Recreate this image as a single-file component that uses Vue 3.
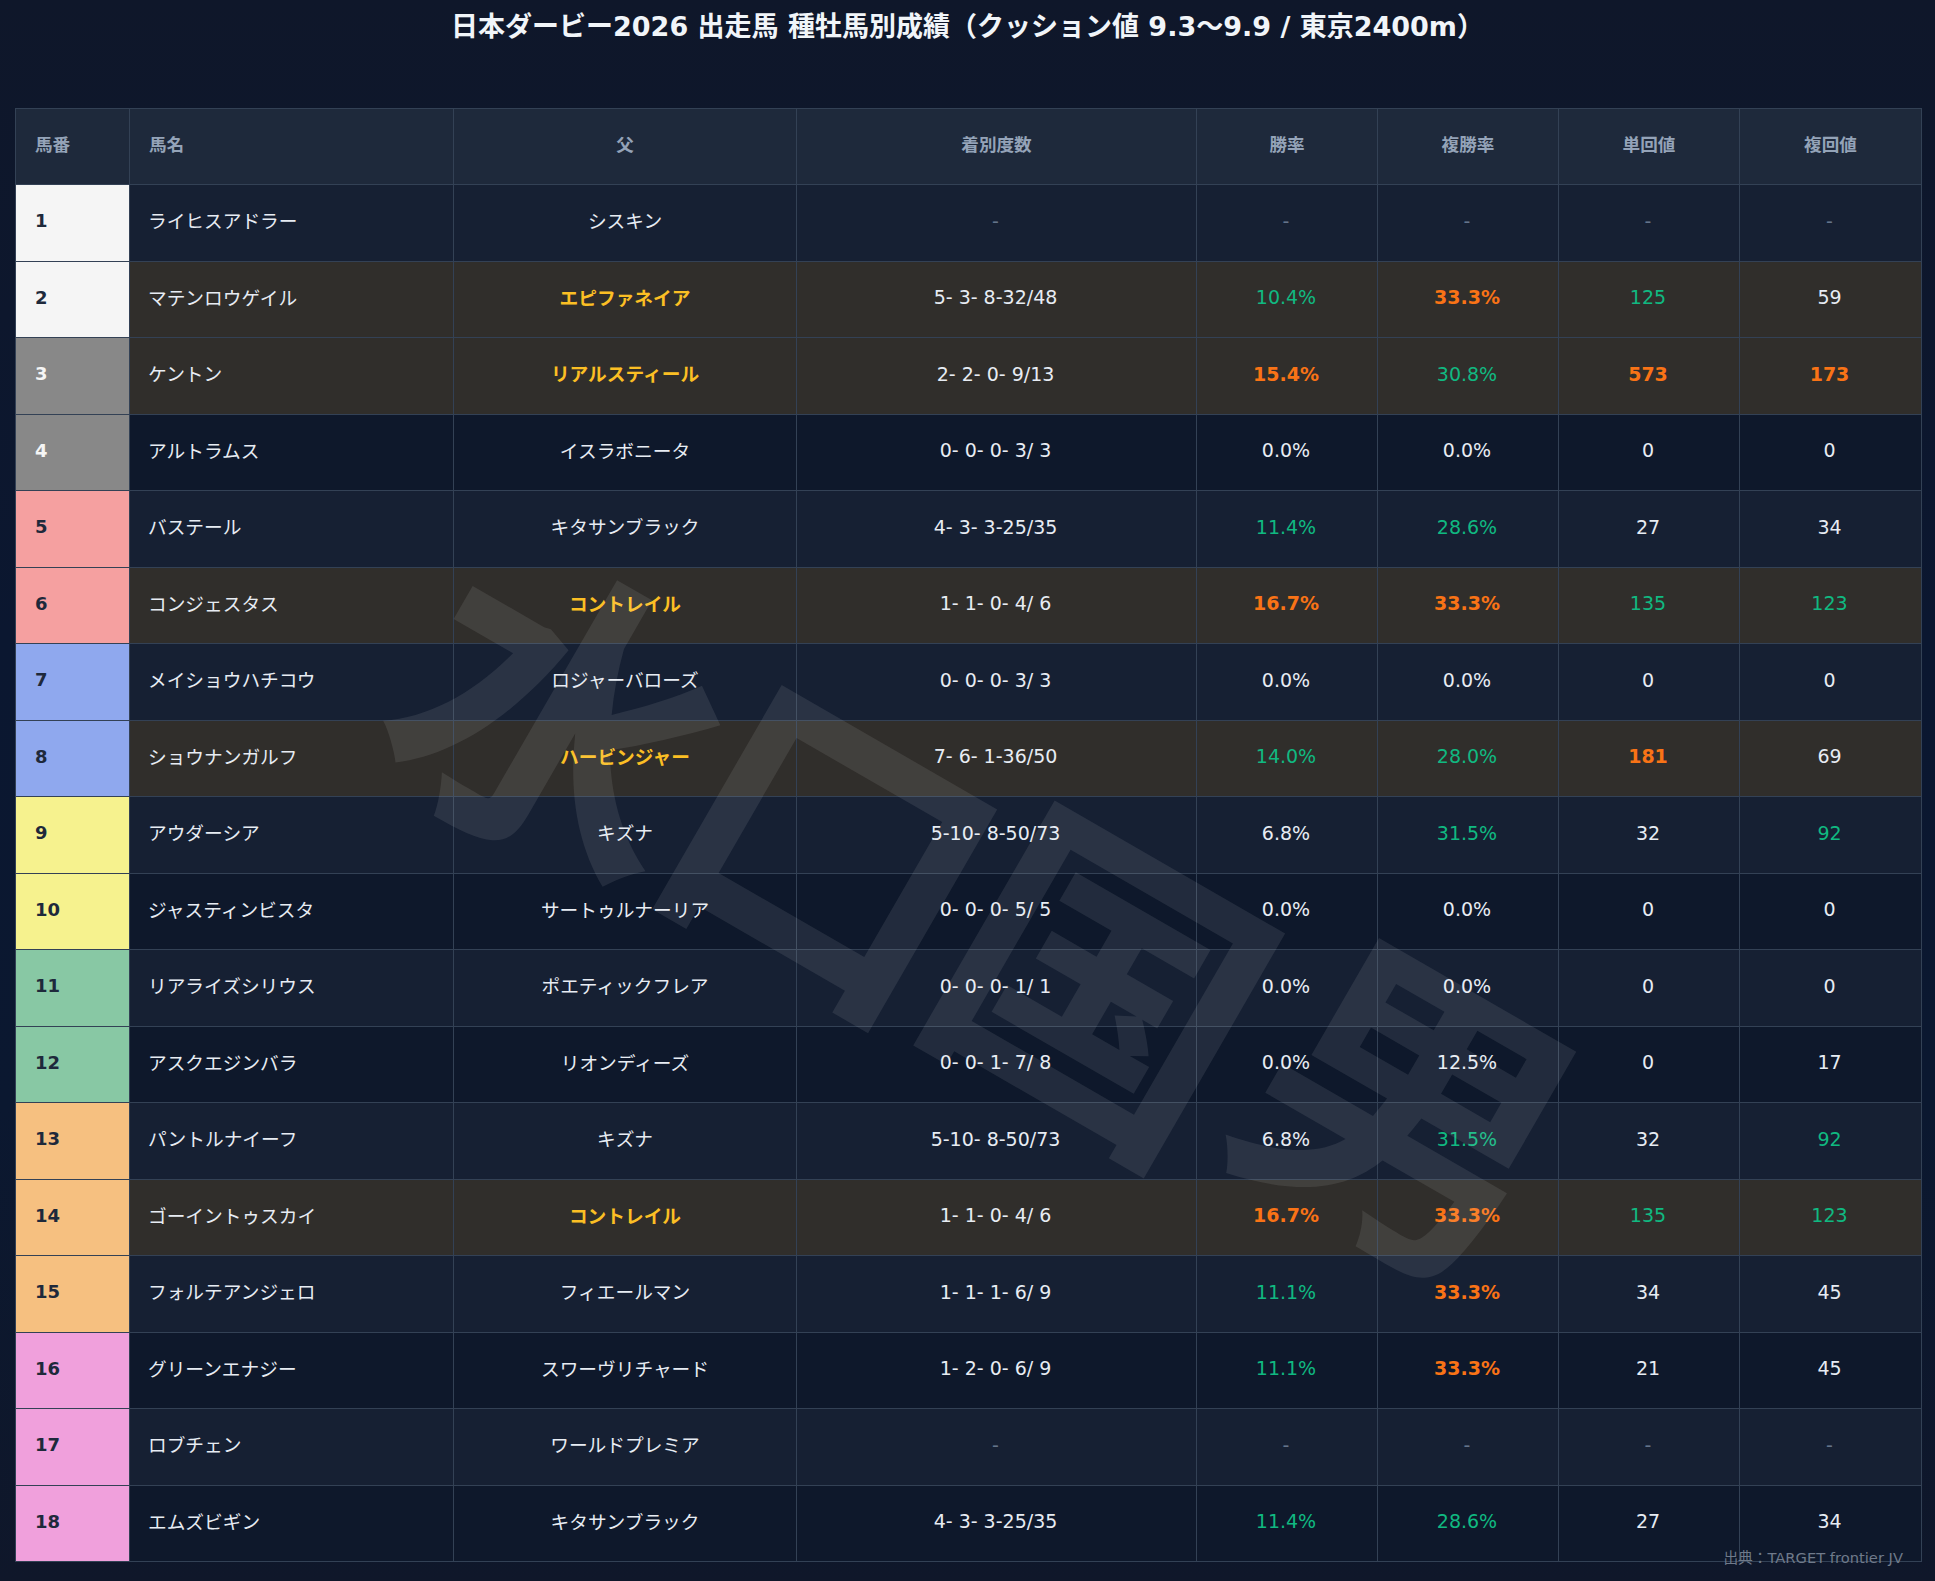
<template>
  <div class="page">
    <h1 class="title">日本ダービー2026 出走馬 種牡馬別成績（クッション値 9.3〜9.9 / 東京2400m）</h1>
    <div class="tableWrap">
      <table class="results">
        <colgroup>
          <col v-for="(w, i) in colWidths" :key="i" :style="{ width: w + 'px' }" />
        </colgroup>
        <thead>
          <tr>
            <th class="left">馬番</th>
            <th class="left">馬名</th>
            <th>父</th>
            <th>着別度数</th>
            <th>勝率</th>
            <th>複勝率</th>
            <th>単回値</th>
            <th>複回値</th>
          </tr>
        </thead>
        <tbody>
          <tr v-for="h in horses" :key="h.no" :class="{ hl: h.hl }">
            <td class="no" :class="'waku' + waku(h.no)">{{ h.no }}</td>
            <td class="name">{{ h.name }}</td>
            <td class="sire">{{ h.sire }}</td>
            <td class="mid" :class="{ dash: !h.rec }">{{ h.rec || '-' }}</td>
            <td class="mid" :class="rate(h.win, 15, 10)">{{ pct(h.win) }}</td>
            <td class="mid" :class="rate(h.place, 33, 20)">{{ pct(h.place) }}</td>
            <td class="mid" :class="rate(h.tan, 150, 100)">{{ h.tan ?? '-' }}</td>
            <td class="mid" :class="rate(h.fuku, 150, 80)">{{ h.fuku ?? '-' }}</td>
          </tr>
        </tbody>
      </table>
    </div>
    <span
      v-for="m in marks"
      :key="m.ch"
      class="watermark"
      :style="{ left: m.x + 'px', top: m.y + 'px' }"
    >{{ m.ch }}</span>
    <div class="source">出典：TARGET frontier JV</div>
  </div>
</template>

<script setup>
const colWidths = [114, 324, 343, 400, 181, 181, 181, 182];

// watermark letters, centre of each glyph
const marks = [
  { ch: "水", x: 568, y: 703 },
  { ch: "口", x: 839, y: 834 },
  { ch: "国", x: 1111, y: 970 },
  { ch: "男", x: 1420, y: 1095 },
];

const row = (no, name, sire, rec, win, place, tan, fuku, hl = false) => ({ no, name, sire, rec, win, place, tan, fuku, hl });

const horses = [
  row(1, "ライヒスアドラー", "シスキン", null, null, null, null, null),
  row(2, "マテンロウゲイル", "エピファネイア", "5- 3- 8-32/48", 10.4, 33.3, 125, 59, true),
  row(3, "ケントン", "リアルスティール", "2- 2- 0- 9/13", 15.4, 30.8, 573, 173, true),
  row(4, "アルトラムス", "イスラボニータ", "0- 0- 0- 3/ 3", 0, 0, 0, 0),
  row(5, "バステール", "キタサンブラック", "4- 3- 3-25/35", 11.4, 28.6, 27, 34),
  row(6, "コンジェスタス", "コントレイル", "1- 1- 0- 4/ 6", 16.7, 33.3, 135, 123, true),
  row(7, "メイショウハチコウ", "ロジャーバローズ", "0- 0- 0- 3/ 3", 0, 0, 0, 0),
  row(8, "ショウナンガルフ", "ハービンジャー", "7- 6- 1-36/50", 14, 28, 181, 69, true),
  row(9, "アウダーシア", "キズナ", "5-10- 8-50/73", 6.8, 31.5, 32, 92),
  row(10, "ジャスティンビスタ", "サートゥルナーリア", "0- 0- 0- 5/ 5", 0, 0, 0, 0),
  row(11, "リアライズシリウス", "ポエティックフレア", "0- 0- 0- 1/ 1", 0, 0, 0, 0),
  row(12, "アスクエジンバラ", "リオンディーズ", "0- 0- 1- 7/ 8", 0, 12.5, 0, 17),
  row(13, "パントルナイーフ", "キズナ", "5-10- 8-50/73", 6.8, 31.5, 32, 92),
  row(14, "ゴーイントゥスカイ", "コントレイル", "1- 1- 0- 4/ 6", 16.7, 33.3, 135, 123, true),
  row(15, "フォルテアンジェロ", "フィエールマン", "1- 1- 1- 6/ 9", 11.1, 33.3, 34, 45),
  row(16, "グリーンエナジー", "スワーヴリチャード", "1- 2- 0- 6/ 9", 11.1, 33.3, 21, 45),
  row(17, "ロブチェン", "ワールドプレミア", null, null, null, null, null),
  row(18, "エムズビギン", "キタサンブラック", "4- 3- 3-25/35", 11.4, 28.6, 27, 34),
];

// 18頭立ての枠番
const waku = (no) => {
  if (no <= 12) return Math.ceil(no / 2);
  if (no <= 15) return 7;
  return 8;
};

const pct = (v) => (v === null ? "-" : v.toFixed(1) + "%");

const rate = (v, hot, good) => {
  if (v === null) return "dash";
  if (v >= hot) return "hot";
  if (v >= good) return "good";
  return "";
};
</script>

<style>
html, body {
  margin: 0;
  background: #0d1729;
}
</style>

<style scoped>
.page {
  position: relative;
  width: 1935px;
  height: 1581px;
  overflow: hidden;
  background: linear-gradient(180deg, #0f172a 0%, #0b1730 40%, #0b1830 70%, #0f172a 100%);
  font-family: "DejaVu Sans", "Noto Sans CJK JP", sans-serif;
  color: #e7ecf3;
}

.title {
  margin: 0;
  height: 108px;
  padding-top: 9px;
  box-sizing: border-box;
  text-align: center;
  font-size: 27px;
  line-height: 36px;
  font-weight: 700;
  color: #f1f5f9;
}

.tableWrap {
  padding: 0 14px 0 15px;
}

.results {
  width: 1906px;
  table-layout: fixed;
  border-collapse: collapse;
  font-size: 19px;
}

th, td {
  border: 1px solid #334155;
  padding: 0 19px 4px;
  box-sizing: border-box;
}

th {
  height: 76px;
  padding-bottom: 6px;
  background: #1e293b;
  color: #94a3b8;
  font-size: 17.6px;
  font-weight: 700;
  text-align: center;
}

th.left {
  text-align: left;
}

td {
  height: 76.5px;
}

tbody tr:nth-child(odd) td {
  background: #162033;
}

tbody tr:nth-child(even) td {
  background: #0e182b;
}

tbody tr.hl td {
  background: #302e2b;
}

tbody tr td.no {
  font-weight: 700;
  font-size: 18px;
  color: #1e293b;
}

tbody tr td.waku1 { background: #f5f5f5; }
tbody tr td.waku2 { background: #888888; color: #f5f5f5; }
tbody tr td.waku3 { background: #f5a0a0; }
tbody tr td.waku4 { background: #8fa8ee; }
tbody tr td.waku5 { background: #f6f28e; }
tbody tr td.waku6 { background: #88c8a4; }
tbody tr td.waku7 { background: #f6c080; }
tbody tr td.waku8 { background: #f0a0dc; }

.name {
  font-size: 18.7px;
  padding-left: 18px;
  padding-bottom: 6px;
}

.sire {
  font-size: 18.7px;
  padding-bottom: 6px;
  text-align: center;
}

tr.hl .sire {
  color: #fbbf24;
  font-weight: 700;
}

.mid {
  text-align: center;
  white-space: pre;
  padding-left: 18px;
  padding-right: 20px;
}

.dash {
  color: #64748b;
}

.hot {
  color: #f97316;
  font-weight: 700;
}

.good {
  color: #10b981;
}

.watermark {
  position: absolute;
  transform: translate(-50%, -50%) rotate(30deg);
  font-size: 315px;
  line-height: 1;
  font-weight: 700;
  font-family: "Noto Sans CJK JP", sans-serif;
  color: rgba(255, 255, 255, 0.085);
  pointer-events: none;
}

.source {
  position: absolute;
  right: 32px;
  bottom: 14px;
  font-size: 14.7px;
  color: #6f7a8a;
}
</style>
